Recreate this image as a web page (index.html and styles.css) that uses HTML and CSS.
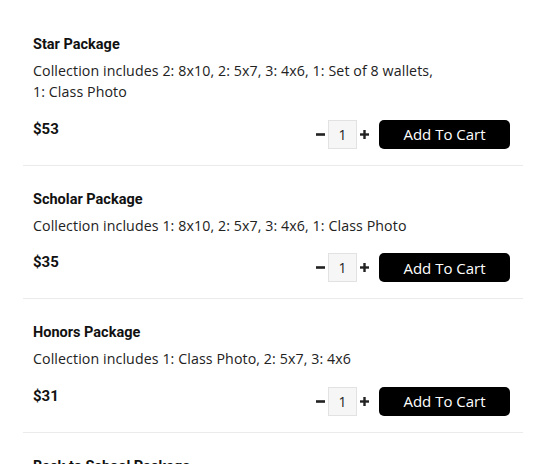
FILE: index.html
```html
<!DOCTYPE html>
<html>
<head>
<meta charset="utf-8">
<link rel="stylesheet" href="styles.css">
</head>
<body>
<div class="list">
  <div class="card">
    <div class="title">Star Package</div>
    <div class="desc">Collection includes 2: 8x10, 2: 5x7, 3: 4x6, 1: Set of 8 wallets,<br>1: Class Photo</div>
    <div class="footer">
      <div class="price">$53</div>
      <div class="controls">
        <span class="step"><svg width="9" height="9" viewBox="0 0 9 9"><rect x="0" y="3.2" width="9" height="2.6" fill="#222"/></svg></span>
        <span class="qty">1</span>
        <span class="step"><svg width="9" height="9" viewBox="0 0 9 9"><rect x="0" y="3.3" width="9" height="2.4" fill="#222"/><rect x="3.3" y="0" width="2.4" height="9" fill="#222"/></svg></span>
        <button class="cart">Add To Cart</button>
      </div>
    </div>
  </div>
  <div class="card">
    <div class="title">Scholar Package</div>
    <div class="desc">Collection includes 1: 8x10, 2: 5x7, 3: 4x6, 1: Class Photo</div>
    <div class="footer">
      <div class="price">$35</div>
      <div class="controls">
        <span class="step"><svg width="9" height="9" viewBox="0 0 9 9"><rect x="0" y="3.2" width="9" height="2.6" fill="#222"/></svg></span>
        <span class="qty">1</span>
        <span class="step"><svg width="9" height="9" viewBox="0 0 9 9"><rect x="0" y="3.3" width="9" height="2.4" fill="#222"/><rect x="3.3" y="0" width="2.4" height="9" fill="#222"/></svg></span>
        <button class="cart">Add To Cart</button>
      </div>
    </div>
  </div>
  <div class="card">
    <div class="title">Honors Package</div>
    <div class="desc">Collection includes 1: Class Photo, 2: 5x7, 3: 4x6</div>
    <div class="footer">
      <div class="price">$31</div>
      <div class="controls">
        <span class="step"><svg width="9" height="9" viewBox="0 0 9 9"><rect x="0" y="3.2" width="9" height="2.6" fill="#222"/></svg></span>
        <span class="qty">1</span>
        <span class="step"><svg width="9" height="9" viewBox="0 0 9 9"><rect x="0" y="3.3" width="9" height="2.4" fill="#222"/><rect x="3.3" y="0" width="2.4" height="9" fill="#222"/></svg></span>
        <button class="cart">Add To Cart</button>
      </div>
    </div>
  </div>
  <div class="card">
    <div class="title">Back to School Package</div>
    <div class="desc">Collection includes 1: Class Photo, 2: 5x7</div>
    <div class="footer">
      <div class="price">$25</div>
      <div class="controls">
        <span class="step"><svg width="9" height="9" viewBox="0 0 9 9"><rect x="0" y="3.2" width="9" height="2.6" fill="#222"/></svg></span>
        <span class="qty">1</span>
        <span class="step"><svg width="9" height="9" viewBox="0 0 9 9"><rect x="0" y="3.3" width="9" height="2.4" fill="#222"/><rect x="3.3" y="0" width="2.4" height="9" fill="#222"/></svg></span>
        <button class="cart">Add To Cart</button>
      </div>
    </div>
  </div>
</div>
</body>
</html>
```

FILE: styles.css
```css
html, body {
  margin: 0;
  padding: 0;
  background: #fff;
}
body {
  overflow: hidden;
  height: 464px;
}
.list {
  padding-top: 11px;
}
.card {
  margin: 0 27px 0 23px;
  padding: 24px 13px 16px 10px;
  border-bottom: 1px solid #ebebeb;
}
.title {
  font-family: Roboto, "Liberation Sans", sans-serif;
  font-weight: 700;
  font-size: 14.5px;
  line-height: 20px;
  color: #111;
}
.desc {
  margin-top: 5px;
  font-family: "Open Sans", "Liberation Sans", sans-serif;
  font-size: 14.2px;
  letter-spacing: 0.1px;
  line-height: 21px;
  color: #222;
}
.footer {
  margin-top: 14.5px;
  display: flex;
  justify-content: space-between;
  align-items: flex-start;
}
.price {
  font-family: Roboto, "Liberation Sans", sans-serif;
  font-weight: 700;
  font-size: 15px;
  line-height: 24px;
  color: #111;
}
.controls {
  margin-top: 3px;
  display: flex;
  align-items: center;
}
.step {
  width: 9px;
  height: 29px;
  display: flex;
  align-items: center;
  justify-content: center;
}
.step svg {
  display: block;
}
.qty {
  margin: 0 3px;
  width: 27px;
  height: 27px;
  border: 1px solid #e2e2e2;
  background: #f6f6f6;
  display: flex;
  align-items: center;
  justify-content: center;
  font-family: "Open Sans", sans-serif;
  font-size: 14px;
  color: #222;
}
.cart {
  margin-left: 10px;
  width: 131px;
  height: 29px;
  border: none;
  border-radius: 5px;
  background: #000;
  color: #fff;
  font-family: "Open Sans", sans-serif;
  font-weight: 500;
  font-size: 15px;
  padding: 0;
  cursor: pointer;
}
```
